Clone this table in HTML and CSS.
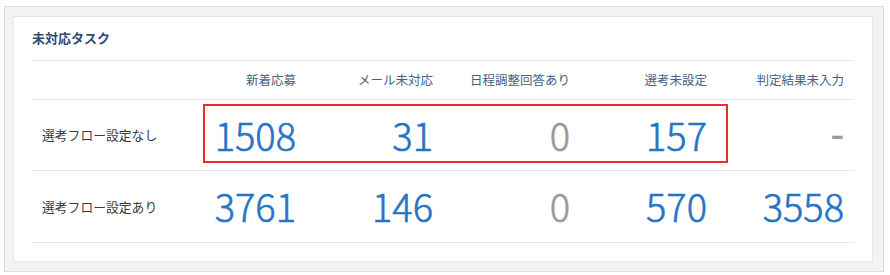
FILE: index.html
```html
<!DOCTYPE html>
<html lang="ja">
<head>
<meta charset="utf-8">
<title>未対応タスク</title>
<link rel="stylesheet" href="styles.css">
</head>
<body>
<div class="outer">
  <div class="card">
    <h2 class="title">未対応タスク</h2>
    <div class="table-wrap">
      <table class="tasks">
        <thead>
          <tr>
            <th class="label-col"></th>
            <th>新着応募</th>
            <th>メール未対応</th>
            <th>日程調整回答あり</th>
            <th>選考未設定</th>
            <th>判定結果未入力</th>
          </tr>
        </thead>
        <tbody>
          <tr>
            <td class="label">選考フロー設定なし</td>
            <td class="num">1508</td>
            <td class="num">31</td>
            <td class="num zero">0</td>
            <td class="num">157</td>
            <td class="num none"><span class="dash">-</span></td>
          </tr>
          <tr>
            <td class="label">選考フロー設定あり</td>
            <td class="num">3761</td>
            <td class="num">146</td>
            <td class="num zero">0</td>
            <td class="num">570</td>
            <td class="num">3558</td>
          </tr>
        </tbody>
      </table>
      <div class="highlight"></div>
    </div>
  </div>
</div>
</body>
</html>
```

FILE: styles.css
```css
html, body {
  margin: 0;
  padding: 0;
  background: #ffffff;
}

body {
  font-family: "Noto Sans CJK JP", "Noto Sans", sans-serif;
}

.outer {
  margin: 6px 0 0 4px;
  width: 880px;
  box-sizing: border-box;
  border: 1px solid #dedede;
  background: #f3f3f3;
  padding: 9px 10px 9px 8px;
}

.card {
  background: #ffffff;
  border: 1px solid #e7e7e7;
  padding: 11px 18px 18px 18px;
}

.title {
  margin: 0;
  font-size: 13px;
  line-height: 20px;
  font-weight: bold;
  color: #2e4d70;
  padding-bottom: 12px;
  border-bottom: 1px solid #e6e6e6;
}

.table-wrap {
  position: relative;
}

.tasks {
  width: 822px;
  border-collapse: collapse;
  table-layout: fixed;
}

.tasks th,
.tasks td {
  width: 137px;
  padding: 0 10px 0 0;
  text-align: right;
  border-bottom: 1px solid #e6e6e6;
  box-sizing: border-box;
}

.tasks th {
  height: 38px;
  font-size: 12.5px;
  font-weight: normal;
  color: #46627f;
  vertical-align: middle;
}

.tasks td {
  height: 71px;
  vertical-align: middle;
}

.tasks tbody tr:last-child td {
  height: 72px;
}

.tasks .label {
  text-align: left;
  padding: 0 0 0 10px;
  font-size: 12.8px;
  color: #3a3a3a;
}

.tasks .num {
  font-size: 38px;
  line-height: 40px;
  font-weight: 300;
  -webkit-text-stroke: 0.6px currentColor;
  color: #2574c6;
  font-variant-numeric: tabular-nums;
}

.tasks .zero,
.tasks .none {
  color: #9a9a9a;
}

.tasks .dash {
  display: inline-block;
  font-weight: 400;
  transform: translateY(-3px);
}

.highlight {
  position: absolute;
  left: 171px;
  top: 43px;
  width: 525px;
  height: 59px;
  box-sizing: border-box;
  border: 2px solid #ee2b2b;
  pointer-events: none;
}
```
